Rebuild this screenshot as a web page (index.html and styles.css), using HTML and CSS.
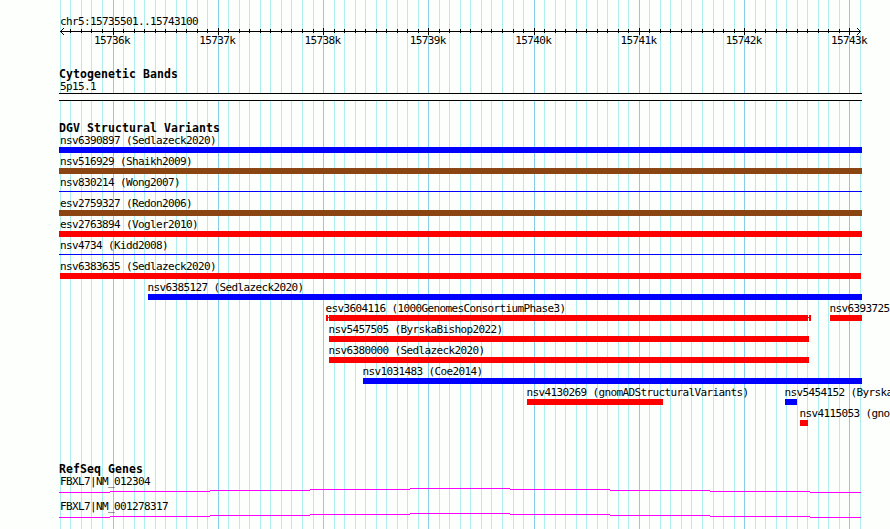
FILE: index.html
```
<!DOCTYPE html>
<html lang="en">
<head>
  <meta charset="UTF-8">
  <title>chr5:15735501..15743100</title>
  <link rel="stylesheet" href="styles.css">
</head>
<body>
  <div class="browser">
    <svg class="grid" width="890" height="529" shape-rendering="crispEdges">
      <path id="gridMinor" class="grid-minor"/>
      <path id="gridMajor" class="grid-major"/>
    </svg>

    <header class="ruler">
      <div class="region">chr5:15735501..15743100</div>
      <svg class="scale" width="803" height="9" shape-rendering="crispEdges">
        <path d="M1 4.5H802M2 3.5h1M3 2.5h1M4 1.5h1M2 5.5h1M3 6.5h1M4 7.5h1M800 3.5h1M799 2.5h1M798 1.5h1M800 5.5h1M799 6.5h1M798 7.5h1"/>
        <path id="ticks"/>
      </svg>
      <div class="ticks-text">
        <span>15736k</span><span>15737k</span><span>15738k</span><span>15739k</span><span>15740k</span><span>15741k</span><span>15742k</span><span>15743k</span>
      </div>
    </header>

    <section class="track cytoband">
      <h2>Cytogenetic Bands</h2>
      <div class="label">5p15.1</div>
      <div class="band"></div>
    </section>

    <section class="track variants">
      <h2>DGV Structural Variants</h2>
      <div id="lanes"></div>
    </section>

    <section class="track genes">
      <h2>RefSeq Genes</h2>
      <div class="gene">
        <div class="label">FBXL7|NM_012304</div>
        <svg width="803" height="5" shape-rendering="crispEdges"><path d="M0 4.5H51M51 3.5H151M151 2.5H251M251 1.5H351M351 .5H451M451 1.5H551M551 2.5H651M651 3.5H751M751 4.5H802"/></svg>
      </div>
      <div class="gene">
        <div class="label">FBXL7|NM_001278317</div>
        <svg width="803" height="5" shape-rendering="crispEdges"><path d="M0 4.5H51M51 3.5H151M151 2.5H251M251 1.5H351M351 .5H451M451 1.5H551M551 2.5H651M651 3.5H751M751 4.5H802"/></svg>
      </div>
    </section>
  </div>
  <script src="tracks.js"></script>
</body>
</html>
```
FILE: styles.css
```
body {
  margin: 0;
  background: #fdfffc;
  color: #000;
  font-family: "DejaVu Sans Mono", "Liberation Mono", monospace;
  font-size: 11px;
  line-height: 13px;
  letter-spacing: -0.62px;
}
.browser {
  position: relative;
  box-sizing: border-box;
  width: 890px;
  height: 529px;
  padding: 15px 0 0 59px;
  overflow: hidden;
  white-space: nowrap;
}
svg {
  display: block;
  fill: none;
}
/* vertical lines run behind every track */
.grid {
  position: absolute;
  top: 0;
  left: 0;
  z-index: -1;
}
.grid-minor {
  stroke: #afeeee;
}
.grid-major {
  stroke: #87ceeb;
}
.ruler {
  height: 53px;
}
.region,
.label {
  padding-left: 1px;
}
.region {
  height: 12px;
}
.scale {
  stroke: #000;
}
.ticks-text {
  display: flex;
  justify-content: space-between;
  width: 773px;
  margin-top: -2px;
  padding-left: 35px;
}
h2 {
  margin: 0;
  height: 12px;
  font-size: 11.5px;
  font-weight: bold;
  line-height: 13px;
  letter-spacing: 0.08px;
}
.cytoband {
  height: 54px;
}
.band {
  width: 803px;
  height: 6px;
  border-top: 1px solid #000;
  border-bottom: 1px solid #000;
  background: #fdfffc;
}
.variants {
  height: 341px;
}
#lanes {
  margin-top: -2px;
}
.lane {
  display: flex;
  height: 21px;
}
.feature {
  flex: none;
}
.feature .label {
  height: 15px;
  padding: 2px 0 0;
  box-sizing: border-box;
  margin-left: -0.5px;
}
.feature.clipped .label {
  margin-left: 1px;
}
.feature.edge .label {
  margin-left: 0;
}
.bar {
  height: 6px;
}
.gain .bar {
  background: #00f;
}
.loss .bar {
  background: #f00;
}
.complex .bar {
  background: #8b4513;
}
.thin .bar {
  height: 1px;
  margin-top: 2px;
  background: #00f;
}
/* uncertain breakpoints: small caps joined to the main bar */
.fuzzy .bar {
  display: flex;
  align-items: center;
  gap: 1px;
  background: linear-gradient(#f00, #f00) 0 2px / 100% 1px no-repeat;
}
.fuzzy .bar i {
  width: 2px;
  height: 6px;
  background: #f00;
}
.fuzzy .bar b {
  flex: 1;
  height: 6px;
  background: #f00;
}
.genes svg {
  stroke: #f0f;
}
.gene {
  height: 25px;
}
.gene .label {
  height: 13px;
}
```
FILE: tracks.js
```
const LEFT = 59;

// [label, first pixel, last pixel, type]
const lanes = [
  [['nsv6390897 (Sedlazeck2020)', 59, 862, 'gain clipped']],
  [['nsv516929 (Shaikh2009)', 59, 862, 'complex clipped']],
  [['nsv830214 (Wong2007)', 59, 862, 'thin clipped']],
  [['esv2759327 (Redon2006)', 59, 862, 'complex clipped']],
  [['esv2763894 (Vogler2010)', 59, 862, 'loss clipped']],
  [['nsv4734 (Kidd2008)', 59, 862, 'thin clipped']],
  [['nsv6383635 (Sedlazeck2020)', 60, 861, 'loss edge']],
  [['nsv6385127 (Sedlazeck2020)', 148, 862, 'gain']],
  [['esv3604116 (1000GenomesConsortiumPhase3)', 326, 811, 'fuzzy'], ['nsv6393725', 830, 862, 'loss']],
  [['nsv5457505 (ByrskaBishop2022)', 329, 809, 'loss']],
  [['nsv6380000 (Sedlazeck2020)', 329, 809, 'loss']],
  [['nsv1031483 (Coe2014)', 363, 862, 'gain']],
  [['nsv4130269 (gnomADStructuralVariants)', 527, 663, 'loss'], ['nsv5454152 (Byrska', 785, 797, 'gain']],
  [['nsv4115053 (gno', 800, 808, 'loss']]
];

let html = '';
for (const lane of lanes) {
  let x = LEFT;
  html += '<div class="lane">';
  for (const [name, start, end, type] of lane) {
    const parts = type === 'fuzzy' ? '<i></i><b></b><i></i>' : '';
    html += `<div class="feature ${type}" style="margin-left:${start - x}px;width:${end - start}px">` +
      `<div class="label">${name}</div><div class="bar">${parts}</div></div>`;
    x = end;
  }
  html += '</div>';
}
document.getElementById('lanes').innerHTML = html;

// a line every 100 bp, a major one every 1 kb
let minor = '', major = '', ticks = '';
for (let k = 0; k <= 76; k++) {
  const x = Math.floor(60.4 + k * 800 / 76) + 0.5;
  if (k % 10 === 5) {
    major += `M${x} 0V529`;
    ticks += `M${x - LEFT} 1V8`;
  } else {
    minor += `M${x} 0V529`;
    if (k > 0 && k < 76) ticks += `M${x - LEFT} 2V6`;
  }
}
document.getElementById('gridMinor').setAttribute('d', minor);
document.getElementById('gridMajor').setAttribute('d', major);
document.getElementById('ticks').setAttribute('d', ticks);
```
